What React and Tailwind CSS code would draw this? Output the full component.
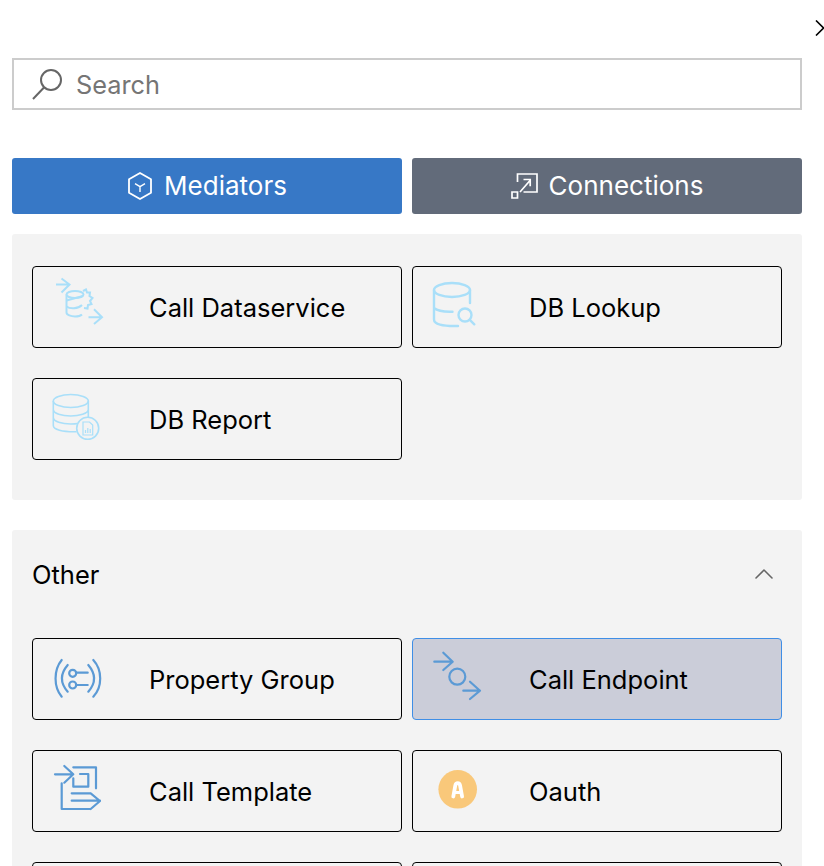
import React from 'react';
import { ChevronUp } from 'lucide-react';

const lightBlue = '#a9dff9';
const midBlue = '#5b9ad5';

function CallDataserviceIcon() {
    return (
        <svg viewBox="0 0 60 60" className="w-full h-full" fill="none" stroke={lightBlue} strokeWidth="2">
            <path d="M8 7.5H21M13.5 1.5L21.5 7.5L13.5 15.5" />
            <path d="M40.5 40.3H53.5M46 32.3L54 40.3L46 47" />
            <ellipse cx="27" cy="17.5" rx="8.5" ry="3.5" />
            <path d="M18.5 17.5V35.5C18.5 38 23 39.5 27 39.5C31 39.5 33 38.5 34 37.5" />
            <path d="M18.5 23.5L35 19M18.5 29.5C22 32 30 32 34 28" />
            <path d="M35 14L38 12.5L39 15.5L42 15.5L41.5 19L44.5 21L42 24L43.5 27L40 28L39.5 31.5L36 31" />
        </svg>
    );
}

function DbLookupIcon() {
    return (
        <svg viewBox="0 0 60 60" className="w-full h-full" fill="none" stroke={lightBlue} strokeWidth="2.4" strokeLinecap="round">
            <ellipse cx="24" cy="13" rx="18" ry="7" />
            <path d="M6 13V42.5C6 47 14 49.5 30 49M6 31C9 33.5 16 35 24.5 34.7M42 13V26" />
            <circle cx="37" cy="38" r="6.5" />
            <path d="M41.8 42.8L46.3 47.3" />
        </svg>
    );
}

function DbReportIcon() {
    return (
        <svg viewBox="0 0 60 60" className="w-full h-full" fill="none" stroke={lightBlue} strokeWidth="1.6">
            <ellipse cx="22.8" cy="12" rx="17.5" ry="6.5" />
            <path d="M5.3 12V36.5C5.3 40.5 14 43 28.5 42.7M5.3 20.5C5.3 24.5 14 27 22.8 27C31 27 40.3 24.5 40.3 20.5M5.3 28.5C5.3 32.5 14 35 22.8 35C25 35 27.5 34.9 29.5 34.5M40.3 12V28" />
            <circle cx="39.7" cy="39.3" r="11" />
            <path d="M35 33H41.5L44.7 36V46H35Z" strokeWidth="1.2" />
            <path d="M37.5 44V41M39.8 44V39M42.2 44V40" strokeWidth="1.2" />
        </svg>
    );
}

function PropertyGroupIcon() {
    return (
        <svg viewBox="0 0 60 60" className="w-full h-full" fill="none" stroke={midBlue} strokeWidth="2.2" strokeLinecap="round">
            <path d="M13.7 11C5.5 21 5.5 38 13.7 47.7M19.7 16C12 25 12 34 19.7 42.7" />
            <path d="M45.3 11C54.5 21 54.5 38 45.3 47.7M40.3 16C48 25 48 34 40.3 42.7" />
            <circle cx="24.7" cy="24.3" r="3.5" />
            <circle cx="24.7" cy="36" r="3.5" />
            <path d="M28.7 23.7H39.7M28.7 36H39.7" />
        </svg>
    );
}

function CallEndpointIcon() {
    return (
        <svg viewBox="0 0 60 60" className="w-full h-full" fill="none" stroke={midBlue} strokeWidth="2.2" strokeLinecap="round" strokeLinejoin="round">
            <path d="M6.3 12.7H24.3M15.3 3.7L24.7 12.7L15.3 21" />
            <circle cx="29.3" cy="27.7" r="8" />
            <path d="M35.3 41.7H52M42 32.7L52 41.7L42 50" />
        </svg>
    );
}

function CallTemplateIcon() {
    return (
        <svg viewBox="0 0 60 60" className="w-full h-full" fill="none" stroke={midBlue} strokeWidth="2.2" strokeLinecap="round" strokeLinejoin="round">
            <path d="M7 13.3H24.7M16.3 5L25.3 13.3L16.3 21.7" />
            <path d="M25.3 6.3H48V27.3M32 13H40.3V25.7H25.3V17.3" />
            <path d="M13.7 22.3V48H42M23.7 32.3H42M23.7 39.7H52M42.7 32.3L52 40L42.7 48" />
        </svg>
    );
}

function OauthIcon() {
    return (
        <svg viewBox="0 0 60 60" className="w-full h-full">
            <circle cx="29.7" cy="28.3" r="19.3" fill="#f9c87a" />
            <path d="M25.3 35.5L27.3 24.5C27.9 21.4 31.5 21.4 32.1 24.5L34.1 35.5" fill="none" stroke="#fff" strokeWidth="3.8" strokeLinecap="round" />
            <path d="M26 31.5H33.4" stroke="#fff" strokeWidth="3" />
        </svg>
    );
}

function MediatorsIcon() {
    return (
        <svg viewBox="0 0 26 28" className="w-[26px] h-[28px]" fill="none" stroke="#fff" strokeWidth="1.8" strokeLinejoin="round">
            <path d="M13 1L24 7.3V20.7L13 27L2 20.7V7.3Z" />
            <path d="M8 11.7L13 14.7L18 11.7M13 14.7V20" strokeWidth="1.4" />
        </svg>
    );
}

function ConnectionsIcon() {
    return (
        <svg viewBox="0 0 27 26" className="w-[27px] h-[26px]" fill="none" stroke="#fff" strokeWidth="1.7">
            <path d="M6.5 9V1H26V19H12.5" />
            <path d="M9 19L19 7.5M12.5 6.5H19.2V13.2" />
            <path d="M1 19H6.5V25H1Z" />
        </svg>
    );
}

function Card({ label, icon, selected }) {
    return (
        <div className={`h-[82px] rounded-[4px] border flex items-center pl-[15px] ${selected ? 'bg-[#cbcdd9] border-[#3f8ee6]' : 'bg-[#f3f3f3] border-black'}`}>
            <div className="w-[60px] h-[60px] shrink-0">{icon}</div>
            <span className="ml-[41px] pt-[2px] text-[25.5px] leading-none text-black">{label}</span>
        </div>
    );
}

export default function App() {
    return (
        <div className="w-[824px] h-[866px] overflow-hidden bg-white font-['Inter',sans-serif]">
            <div className="h-[58px] flex justify-end items-start pt-[20px]">
                <svg viewBox="0 0 9 16" className="w-[9px] h-[16px]" fill="none" stroke="#000" strokeWidth="1.6">
                    <path d="M1 0.5L8.5 8L1 15.5" />
                </svg>
            </div>

            <div className="ml-3 w-[790px] h-[52px] border-2 border-[#cccccc] flex items-center pl-[17px]">
                <svg viewBox="0 0 32 32" className="w-[32px] h-[32px]" fill="none" stroke="#666" strokeWidth="2">
                    <circle cx="20" cy="12" r="10" />
                    <path d="M13 19.5L2 31" />
                </svg>
                <span className="ml-[13px] pt-[2px] text-[25.3px] leading-none text-[#757575]">Search</span>
            </div>

            <div className="ml-3 w-[790px] mt-12 grid grid-cols-2 gap-x-[10px]">
                <div className="h-[56px] rounded-[3px] bg-[#3778c6] flex items-center justify-center gap-[11px] text-white text-[26px] leading-none">
                    <MediatorsIcon /> <span>Mediators</span>
                </div>
                <div className="h-[56px] rounded-[3px] bg-[#626b7a] flex items-center justify-center gap-[11px] text-white text-[26px] leading-none">
                    <ConnectionsIcon /> <span>Connections</span>
                </div>
            </div>

            <div className="ml-3 w-[790px] mt-5 bg-[#f3f3f3] rounded-[3px] px-5 pt-8 pb-10 grid grid-cols-2 gap-x-[10px] gap-y-[30px]">
                <Card label="Call Dataservice" icon={<CallDataserviceIcon />} />
                <Card label="DB Lookup" icon={<DbLookupIcon />} />
                <Card label="DB Report" icon={<DbReportIcon />} />
            </div>

            <div className="ml-3 w-[790px] mt-[30px] bg-[#f3f3f3] rounded-[3px] px-5 pb-10">
                <div className="h-[108px] pb-[18px] flex items-center justify-between">
                    <span className="text-[25.5px] leading-none text-black">Other</span>
                    <ChevronUp size={32} strokeWidth={1.2} className="text-[#666] mr-[2px] -translate-y-[1px]" />
                </div>
                <div className="grid grid-cols-2 gap-x-[10px] gap-y-[30px]">
                    <Card label="Property Group" icon={<PropertyGroupIcon />} />
                    <Card label="Call Endpoint" icon={<CallEndpointIcon />} selected />
                    <Card label="Call Template" icon={<CallTemplateIcon />} />
                    <Card label="Oauth" icon={<OauthIcon />} />
                    <Card label="" />
                    <Card label="" />
                </div>
            </div>
        </div>
    );
}
